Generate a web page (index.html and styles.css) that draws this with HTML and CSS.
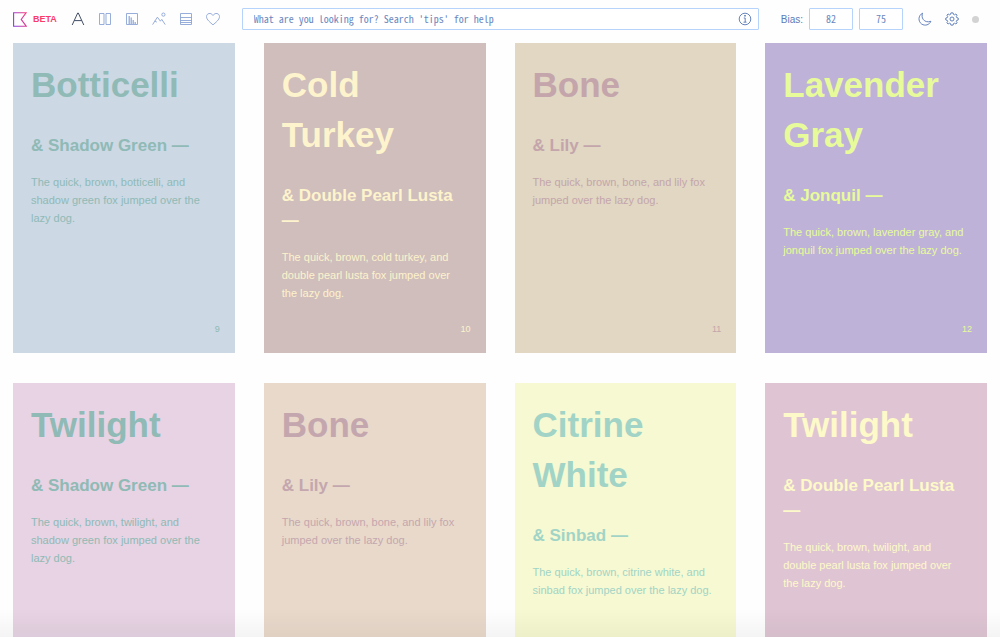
FILE: index.html
```
<!DOCTYPE html>
<html lang="en">
<head>
<meta charset="utf-8">
<meta name="viewport" content="width=device-width, initial-scale=1">
<title>Colour pairs</title>
<link rel="stylesheet" href="styles.css">
</head>
<body>
<header class="topbar">
  <a class="brand" href="#">
    <svg class="logo" viewBox="0 0 14 15" aria-hidden="true">
      <defs><linearGradient id="brand-stroke" x1="0" y1="0.6" x2="1" y2="0.3"><stop offset="0" stop-color="#8a3fd8"/><stop offset="1" stop-color="#f53d80"/></linearGradient></defs>
      <path d="M.6.7H13.2L8.2 7.4l5 6.8H.6z" fill="none" stroke="url(#brand-stroke)" stroke-width="1.1"/>
    </svg>
    <span class="beta">BETA</span>
  </a>
  <nav class="modes" aria-label="Views">
    <a class="icon active" href="#" aria-label="Type"><svg viewBox="0 0 14 14"><path d="M1.2 13 6.7 1h.6l5.5 12M3.4 8.6h7.2"/></svg></a>
    <a class="icon" href="#" aria-label="Poster"><svg viewBox="0 0 14 14"><path d="M1.500 1.500h4.500v11H1.500zM8 1.500h4.500v11H8z"/></svg></a>
    <a class="icon" href="#" aria-label="Gradient"><svg viewBox="0 0 14 14"><path d="M1.500 1.500h11v11h-11z"/><path d="M3.500 4h1.500v8H3.500zM5.500 5.500H7V12H5.500zM7.500 8H9v4H7.500zM9.500 10H11v2H9.500z" class="solid"/></svg></a>
    <a class="icon" href="#" aria-label="Image"><svg viewBox="0 0 14 14"><path d="M.6 12.600 5.400 5.200l3 4 1.400-1.800 3.400 5.200M2.800 9l2 1.100"/><circle cx="11.400" cy="2.600" r="1.600"/></svg></a>
    <a class="icon" href="#" aria-label="Palette"><svg viewBox="0 0 14 14"><path d="M1.500 1.500h11v11h-11zM1.500 5.500h11M1.500 8.500h11M1.500 10.500h11"/></svg></a>
    <a class="icon" href="#" aria-label="Saved"><svg viewBox="0 0 14 14"><path d="M7 12.900C4.600 10.700.5 7.800.5 4.600.5 1.300 5 .1 7 3.500c2-3.400 6.500-2.200 6.500 1.100 0 3.200-4.100 6.100-6.500 8.300z"/></svg></a>
  </nav>
  <form class="search">
    <input class="field search-input" type="text" aria-label="Search" placeholder="What are you looking for? Search 'tips' for help">
    <button class="icon info" type="button" aria-label="Search tips"><svg viewBox="0 0 14 14"><circle cx="7" cy="7" r="5.800"/><path d="M5.800 6h1.400v4M5.500 10.200h3"/><circle cx="7" cy="3.800" r=".5" class="dot-fill"/></svg></button>
  </form>
  <div class="bias">
    <label for="bias-a">Bias:</label>
    <input class="field bias-input" id="bias-a" type="text" value="82">
    <input class="field bias-input" type="text" value="75" aria-label="Second bias">
  </div>
  <div class="tools">
    <button class="icon tool" type="button" aria-label="Dark mode"><svg viewBox="0 0 14 14"><path d="M4.600 1.200C.2 3.200-.2 9.400 3.600 12c3.500 2.300 7.900.8 9.300-2.700-3.400 1.200-6.200.2-7.700-1.900C3.900 5.500 3.800 3.200 4.600 1.200z"/></svg></button>
    <button class="icon tool" type="button" aria-label="Settings"><svg viewBox="0 0 14 14"><path d="M5.900.9h2.200l.4 1.500 1 .4 1.400-.8 1.200 1.200-.8 1.400.4 1 1.500.4v2l-1.500.4-.4 1 .8 1.400-1.200 1.200-1.400-.8-1 .4-.4 1.500H5.900l-.4-1.500-1-.4-1.400.8-1.200-1.200.8-1.400-.4-1L.8 8V6l1.500-.4.4-1-.8-1.400L3.100 2l1.400.8 1-.4z"/><circle cx="7" cy="7" r="2"/></svg></button>
    <span class="status"></span>
  </div>
</header>

<main class="grid">
  <article class="card botticelli">
    <h2>Botticelli</h2>
    <h3>&amp; Shadow Green —</h3>
    <p>The quick, brown, botticelli, and shadow green fox jumped over the lazy dog.</p>
    <span class="number">9</span>
  </article>
  <article class="card cold-turkey">
    <h2>Cold Turkey</h2>
    <h3>&amp; Double Pearl Lusta —</h3>
    <p>The quick, brown, cold turkey, and double pearl lusta fox jumped over the lazy dog.</p>
    <span class="number">10</span>
  </article>
  <article class="card bone">
    <h2>Bone</h2>
    <h3>&amp; Lily —</h3>
    <p>The quick, brown, bone, and lily fox jumped over the lazy dog.</p>
    <span class="number">11</span>
  </article>
  <article class="card lavender">
    <h2>Lavender Gray</h2>
    <h3>&amp; Jonquil —</h3>
    <p>The quick, brown, lavender gray, and jonquil fox jumped over the lazy dog.</p>
    <span class="number">12</span>
  </article>
  <article class="card twilight-green">
    <h2>Twilight</h2>
    <h3>&amp; Shadow Green —</h3>
    <p>The quick, brown, twilight, and shadow green fox jumped over the lazy dog.</p>
  </article>
  <article class="card bone-warm">
    <h2>Bone</h2>
    <h3>&amp; Lily —</h3>
    <p>The quick, brown, bone, and lily fox jumped over the lazy dog.</p>
  </article>
  <article class="card citrine">
    <h2>Citrine White</h2>
    <h3>&amp; Sinbad —</h3>
    <p>The quick, brown, citrine white, and sinbad fox jumped over the lazy dog.</p>
  </article>
  <article class="card twilight-pearl">
    <h2>Twilight</h2>
    <h3>&amp; Double Pearl Lusta —</h3>
    <p>The quick, brown, twilight, and double pearl lusta fox jumped over the lazy dog.</p>
  </article>
</main>
<div class="page-fade"></div>
</body>
</html>
```
FILE: styles.css
```
* { box-sizing: border-box; }

body {
  margin: 0;
  height: 100vh;
  overflow: hidden;
  background: #fefefe;
  font-family: "Liberation Sans", Arial, sans-serif;
  color: #5c7cb8;
}

.topbar {
  display: flex;
  align-items: center;
  padding: 8px 21px 13px 13px;
}

.brand {
  display: flex;
  align-items: center;
  gap: 6px;
  margin-right: 14px;
  text-decoration: none;
}

.logo { width: 14px; height: 15px; }

.beta {
  font-size: 9px;
  font-weight: 700;
  line-height: 14px;
  color: #fb3b6b;
}

.modes {
  display: flex;
  gap: 13px;
  margin-right: 22px;
}

.icon {
  display: block;
  width: 14px;
  height: 14px;
  padding: 0;
  border: 0;
  background: none;
  color: #8ba4d6;
}

.icon svg {
  display: block;
  width: 14px;
  height: 14px;
  fill: none;
  stroke: currentColor;
  stroke-width: 0.9;
}

.icon.active { color: #2e3a52; }
.icon .solid { fill: currentColor; stroke: none; opacity: 0.8; }
.icon .dot-fill { fill: currentColor; }

.search {
  position: relative;
  flex: 1;
  margin: 0 22px 0 0;
}

.field {
  display: block;
  height: 22px;
  border: 1px solid #b5d3fb;
  border-radius: 1px;
  background: #fff;
  color: #6a87c0;
  font: 10px "Noto Sans CJK SC", monospace;
  font-feature-settings: "hwid";
}

.search-input { width: 100%; padding: 0 30px 2px 11px; }
.search-input::placeholder { color: #6a87c0; opacity: 1; }

.icon.info {
  position: absolute;
  top: 4px;
  right: 7px;
  color: #5575b5;
}

.bias {
  display: flex;
  align-items: center;
  gap: 6px;
  margin-right: 15px;
  font-size: 10px;
}

.bias-input { width: 44px; padding: 0 0 2px; text-align: center; }

.tools {
  display: flex;
  align-items: center;
  gap: 13px;
}

.icon.tool { color: #5575b5; }

.status {
  width: 7px;
  height: 7px;
  border-radius: 50%;
  background: #d3d3d3;
}

.grid {
  display: grid;
  grid-template-columns: repeat(4, 1fr);
  grid-auto-rows: minmax(310px, auto);
  gap: 30px 29px;
  padding: 0 13px 30px;
}

.card {
  display: flex;
  flex-direction: column;
  padding: 17px 15px 15px 18px;
}

.card h2 {
  margin: 0 0 23px;
  font-size: 35px;
  line-height: 50px;
}

.card h3 {
  margin: 0 0 15px;
  font-size: 17px;
  line-height: 25px;
}

.card p {
  margin: 0 6px 0 0;
  font-size: 11px;
  line-height: 18px;
}

.number {
  margin-top: auto;
  align-self: flex-end;
  font-size: 9px;
  line-height: 18px;
}

.botticelli { background: #ccd8e4; color: #8fbab6; }
.cold-turkey { background: #cfbebc; color: #fdf3cc; }
.bone { background: #e1d7c3; color: #c4a5ab; }
.lavender { background: #beb2d8; color: #e8fb9a; }
.twilight-green { background: #e7d3e3; color: #8fbab5; }
.bone-warm { background: #e9d9cb; color: #c4a7ae; }
.citrine { background: #f7f9d2; color: #a1d4c6; }
.twilight-pearl { background: #dfc5d3; color: #fdf9c9; }

.page-fade {
  position: fixed;
  inset: auto 0 0;
  height: 28px;
  background: linear-gradient(rgba(0, 0, 0, 0), rgba(0, 0, 0, 0.04));
  pointer-events: none;
}
```
